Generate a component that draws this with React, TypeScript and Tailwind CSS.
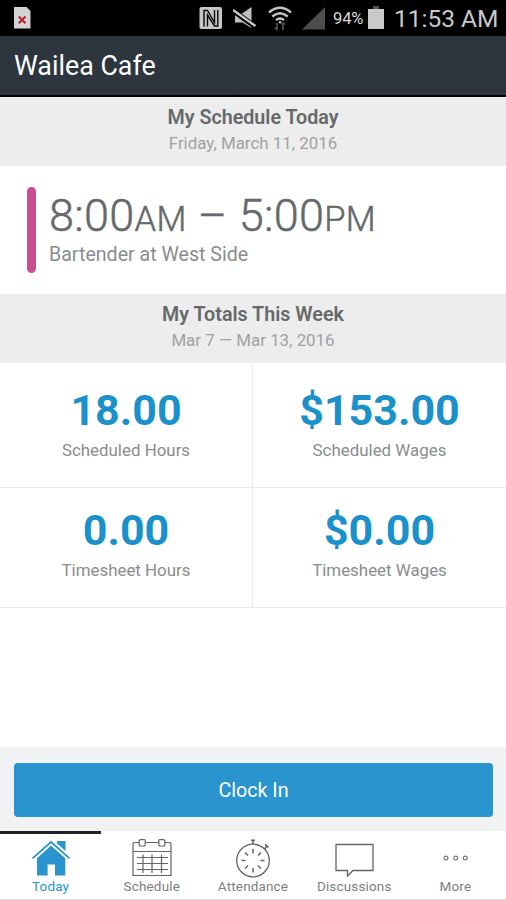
import type { ReactNode } from "react";

const totals = [
  { value: "18.00", label: "Scheduled Hours" },
  { value: "$153.00", label: "Scheduled Wages" },
  { value: "0.00", label: "Timesheet Hours" },
  { value: "$0.00", label: "Timesheet Wages" },
];

function HomeIcon() {
  return (
    <svg width="40" height="38" viewBox="0 0 40 38" fill="#2994cd">
      <path d="M26 2h8.5v10L26 4.5z" />
      <path d="M20 6.6 34.3 19V36.4H24V25.5h-7.4V36.4H6V19z" />
      <path d="M1.5 19.8 20 3.4 38.5 19.8" fill="none" stroke="#fff" strokeWidth="4.4" />
      <path d="M1.5 19.4 20 3 38.5 19.4" fill="none" stroke="#2994cd" strokeWidth="1.7" />
    </svg>
  );
}

function CalendarIcon() {
  return (
    <svg width="40" height="38" viewBox="0 0 40 38" fill="none" stroke="#626566" strokeWidth="1.2">
      <path d="M7 3.5H2.8Q1 3.5 1 5.5V36.5H39V5.5Q39 3.5 37.2 3.5H33M13.2 3.5H26.8M1 12.5H39" />
      <rect x="7.2" y=".6" width="6" height="6.4" rx="1" />
      <rect x="26.8" y=".6" width="6" height="6.4" rx="1" />
      <path d="M5 18.5H36M5 24.5H36M5 30.5H36M11 15.5V34M20 15.5V34M29.5 15.5V34" />
    </svg>
  );
}

function StopwatchIcon() {
  return (
    <svg width="40" height="39" viewBox="0 0 40 39" fill="none" stroke="#626566" strokeWidth="1.3">
      <circle cx="20" cy="21.5" r="16.3" />
      <path d="M20 5V1M18 1.2H22M31.5 10 34.5 6.5M32 5.3 35.5 8.3" strokeWidth="1.6" />
      <path d="M20 10V14.5M20 29V33.5M8.5 21.5H12.5M27.5 21.5H31.5M12 13.5 15 16.5M25 26.5 28 29.5M12 29.5 15 26.5M25 16.5 28 13.5" strokeWidth="1.5" />
    </svg>
  );
}

function CommentIcon() {
  return (
    <svg width="40" height="38" viewBox="0 0 40 38" fill="none" stroke="#626566" strokeWidth="1.3">
      <path d="M2 5.5H39V31.5H19L13.5 37V31.5H2Z" />
    </svg>
  );
}

function MoreIcon() {
  return (
    <svg width="40" height="38" viewBox="0 0 40 38" fill="none" stroke="#777a7b" strokeWidth="1.2">
      <circle cx="11" cy="19" r="1.9" />
      <circle cx="20.7" cy="19" r="1.9" />
      <circle cx="30.2" cy="19" r="1.9" />
    </svg>
  );
}

const tabs = [
  { label: "Today", icon: <HomeIcon />, active: true },
  { label: "Schedule", icon: <CalendarIcon />, active: false },
  { label: "Attendance", icon: <StopwatchIcon />, active: false },
  { label: "Discussions", icon: <CommentIcon />, active: false },
  { label: "More", icon: <MoreIcon />, active: false },
];

function StatusBar() {
  return (
    <div className="flex h-9 items-center bg-black pl-3.5 pr-2 text-[#c9c9c9]">
      <svg width="17" height="22" viewBox="0 0 17 22">
        <path d="M0 0H12.5L16.5 4V21.5H0Z" fill="#d4d4d4" />
        <path d="M4.8 9.5 11.5 16.2M11.5 9.5 4.8 16.2" stroke="#b8232f" strokeWidth="2.2" />
      </svg>

      <svg className="ml-auto" width="24" height="24" viewBox="0 0 24 24">
        <rect x=".5" y="1" width="22.5" height="22" rx="2" fill="#c6c6c6" />
        <path d="M5 20.5V4.5H8.5L15.5 16.5V4" fill="none" stroke="#080808" strokeWidth="1.4" />
        <path d="M8.5 20.5V9L15.5 20H18.8V4" fill="none" stroke="#080808" strokeWidth="1.4" />
      </svg>

      <svg className="ml-2.5" width="24" height="24" viewBox="0 0 24 24">
        <path d="M2 7.5H9L18.5 1V22L9.5 16.5H2Z" fill="#bdbdbd" />
        <path d="M-1 3.8 24 21.8" stroke="#000" strokeWidth="5.2" />
        <path d="M0 4 22.5 20" stroke="#c8c8c8" strokeWidth="2.4" />
      </svg>

      <svg className="ml-2.5" width="26" height="26" viewBox="0 0 26 26" fill="none" stroke="#c4c4c4" strokeWidth="2.4">
        <path d="M2 7.5Q13-1.8 24 7.5M5.3 11.5Q13 4.8 20.7 11.5M9 15.2Q13 11.8 17 15.2" />
        <circle cx="13" cy="17.2" r="1.2" fill="#c4c4c4" stroke="none" />
        <path d="M10 18V25M7.8 22.5 10 25M16 25V18.5M13.8 18.5H18.2" stroke="#4d4d4d" strokeWidth="1.8" />
      </svg>

      <svg className="ml-2" width="25" height="24" viewBox="0 0 25 24">
        <path d="M24 1V23.5H1Z" fill="#4d4d4d" />
      </svg>

      <span className="ml-[7px] w-[31px] whitespace-nowrap pt-0.5 text-[16.5px] tracking-[-0.1px] text-[#d8d8d8]">94%</span>

      <svg className="ml-1" width="16" height="24" viewBox="0 0 16 24">
        <path d="M5 0H11V3H16V23H0V3H5Z" fill="#c9c9c9" />
        <path d="M5 0H11V3H5Z" fill="#555" />
      </svg>

      <span className="ml-2.5 w-[104px] whitespace-nowrap pt-0.5 text-[24.5px] leading-8">11:53 AM</span>
    </div>
  );
}

function SectionHeader({ title, date }: { title: string; date: string }) {
  return (
    <div className="h-[69px] bg-[#ededed] pt-2 text-center">
      <h2 className="text-[19.7px] font-semibold leading-[25px] text-[#66696a]">{title}</h2>
      <p className="text-[16.9px] leading-[26px] text-[#a0a2a3]">{date}</p>
    </div>
  );
}

function TabItem({ label, icon, active }: { label: string; icon: ReactNode; active: boolean }) {
  return (
    <button
      className={
        active
          ? "flex flex-col items-center border-t-[3px] border-[#202428] pt-[5px] text-[#2994cd]"
          : "flex flex-col items-center border-t-[3px] border-transparent pt-[5px] text-[#7d8081]"
      }
    >
      <span className="h-[39px]">{icon}</span>
      <span className="text-[13.5px] leading-4 tracking-[0.15px]">{label}</span>
    </button>
  );
}

export default function App() {
  return (
    <main className="flex h-[900px] w-[506px] flex-col overflow-hidden bg-white font-['Roboto',sans-serif]">
      <StatusBar />

      <header className="flex h-[61px] items-center border-b-2 border-black bg-[#2d353f] px-3.5 pt-px">
        <h1 className="text-[26.8px] leading-8 text-white">Wailea Cafe</h1>
      </header>

      <SectionHeader title="My Schedule Today" date="Friday, March 11, 2016" />

      <section className="flex h-32 pl-[27px] pt-[21px]">
        <div className="h-[86px] w-[9px] rounded-full bg-[#c94e8e]" />
        <div className="ml-[13px] pt-1">
          <p className="whitespace-nowrap text-[45px] font-light leading-[50px] tracking-[0.3px] text-[#66696a] [-webkit-text-stroke:0.5px_#66696a]">
            8:00<span className="text-[34.5px]">AM</span> – 5:00<span className="text-[34.5px]">PM</span>
          </p>
          <p className="-mt-px text-[19.6px] leading-6 text-[#8a8d8e]">Bartender at West Side</p>
        </div>
      </section>

      <SectionHeader title="My Totals This Week" date="Mar 7 — Mar 13, 2016" />

      <section className="grid grid-cols-2 grid-rows-[125px_120px]">
        {totals.map((total) => (
          <div
            key={total.label}
            className="flex flex-col items-center justify-end border-b border-[#e9ebec] pb-[25px] odd:border-r"
          >
            <p className="text-[43px] font-bold leading-[50px] text-[#1b91cb]">{total.value}</p>
            <p className="mt-[3px] text-[16.9px] leading-6 text-[#8a8d8e]">{total.label}</p>
          </div>
        ))}
      </section>

      <div className="mt-auto h-[84px] bg-[#f0f2f3] pl-3.5 pr-[13px] pt-4">
        <button className="h-[54px] w-full rounded bg-[#2994cd] pt-px text-[19.7px] text-white">
          Clock In
        </button>
      </div>

      <nav className="grid h-[69px] grid-cols-5 border-b border-[#dcdedf]">
        {tabs.map((tab) => (
          <TabItem key={tab.label} label={tab.label} icon={tab.icon} active={tab.active} />
        ))}
      </nav>
    </main>
  );
}
